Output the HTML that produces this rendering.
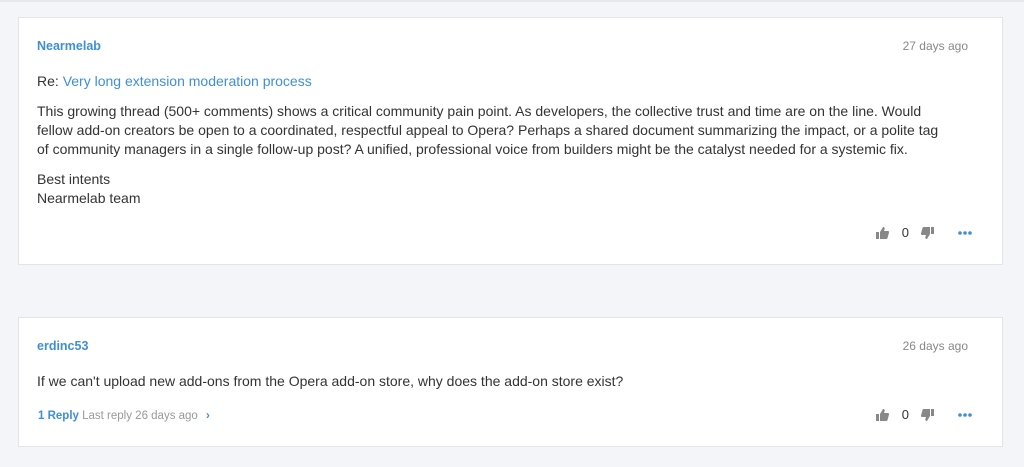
<!DOCTYPE html>
<html><head><style>
body{margin:0;background:#f4f5f9;font-family:"Liberation Sans",sans-serif;width:1024px;height:467px;overflow:hidden;position:relative}
.top{position:absolute;left:0;right:0;top:0;height:2px;background:#e6e7ec}
.card{position:absolute;left:18px;width:985px;background:#fff;border:1px solid #e3e4e8;box-sizing:border-box}
.a{position:absolute;left:18px;font-size:12.5px;font-weight:bold;color:#3e8fd6}
.d{position:absolute;right:34px;font-size:12px;color:#888}
.t{position:absolute;left:18px;right:20px;font-size:14px;line-height:19.2px;color:#333}
.l{color:#3e8fd6}
.v{position:absolute;right:30px;font-size:13px;color:#333;display:flex;align-items:center}
</style></head><body>
<div class="top"></div>
<div class="card" style="top:17px;height:248px">
<div class="a" style="top:21px">Nearmelab</div>
<div class="d" style="top:21px">27 days ago</div>
<div class="t" style="top:54px">Re: <span class="l">Very long extension moderation process</span></div>
<div class="t" style="top:84px;right:auto;width:912px">This growing thread (500+ comments) shows a critical community pain point. As developers, the collective trust and time are on the line. Would fellow add-on creators be open to a coordinated, respectful appeal to Opera? Perhaps a shared document summarizing the impact, or a polite tag of community managers in a single follow-up post? A unified, professional voice from builders might be the catalyst needed for a systemic fix.</div>
<div class="t" style="top:152px">Best intents<br>Nearmelab team</div>
<div class="v" style="top:207px">
<svg width="13" height="12" viewBox="0 0 13 12"><path d="M0 5h3v7H0zM4 5l3-5c1.5 0 2 1 1.5 2.5L8 4h4c1 0 1 1 1 1.5L11.5 11c-.3.7-.7 1-1.5 1H4z" fill="#888"/></svg>
<span style="margin:0 12px 0 13px">0</span>
<svg width="13" height="12" viewBox="0 0 13 12" style="transform:rotate(180deg)"><path d="M0 5h3v7H0zM4 5l3-5c1.5 0 2 1 1.5 2.5L8 4h4c1 0 1 1 1 1.5L11.5 11c-.3.7-.7 1-1.5 1H4z" fill="#888"/></svg>
<svg width="14" height="4" style="margin-left:24px"><circle cx="2" cy="2" r="1.8" fill="#3e8fd6"/><circle cx="7" cy="2" r="1.8" fill="#3e8fd6"/><circle cx="12" cy="2" r="1.8" fill="#3e8fd6"/></svg>
</div>
</div>
<div class="card" style="top:317px;height:130px">
<div class="a" style="top:21px">erdinc53</div>
<div class="d" style="top:21px">26 days ago</div>
<div class="t" style="top:54px">If we can't upload new add-ons from the Opera add-on store, why does the add-on store exist?</div>
<div style="position:absolute;left:19px;top:92px;font-size:11.5px;color:#999"><b class="l">1 Reply</b> Last reply 26 days ago <span class="l" style="margin-left:5px;font-weight:bold">›</span></div>
<div class="v" style="top:89px">
<svg width="13" height="12" viewBox="0 0 13 12"><path d="M0 5h3v7H0zM4 5l3-5c1.5 0 2 1 1.5 2.5L8 4h4c1 0 1 1 1 1.5L11.5 11c-.3.7-.7 1-1.5 1H4z" fill="#888"/></svg>
<span style="margin:0 12px 0 13px">0</span>
<svg width="13" height="12" viewBox="0 0 13 12" style="transform:rotate(180deg)"><path d="M0 5h3v7H0zM4 5l3-5c1.5 0 2 1 1.5 2.5L8 4h4c1 0 1 1 1 1.5L11.5 11c-.3.7-.7 1-1.5 1H4z" fill="#888"/></svg>
<svg width="14" height="4" style="margin-left:24px"><circle cx="2" cy="2" r="1.8" fill="#3e8fd6"/><circle cx="7" cy="2" r="1.8" fill="#3e8fd6"/><circle cx="12" cy="2" r="1.8" fill="#3e8fd6"/></svg>
</div>
</div>
</body></html>
